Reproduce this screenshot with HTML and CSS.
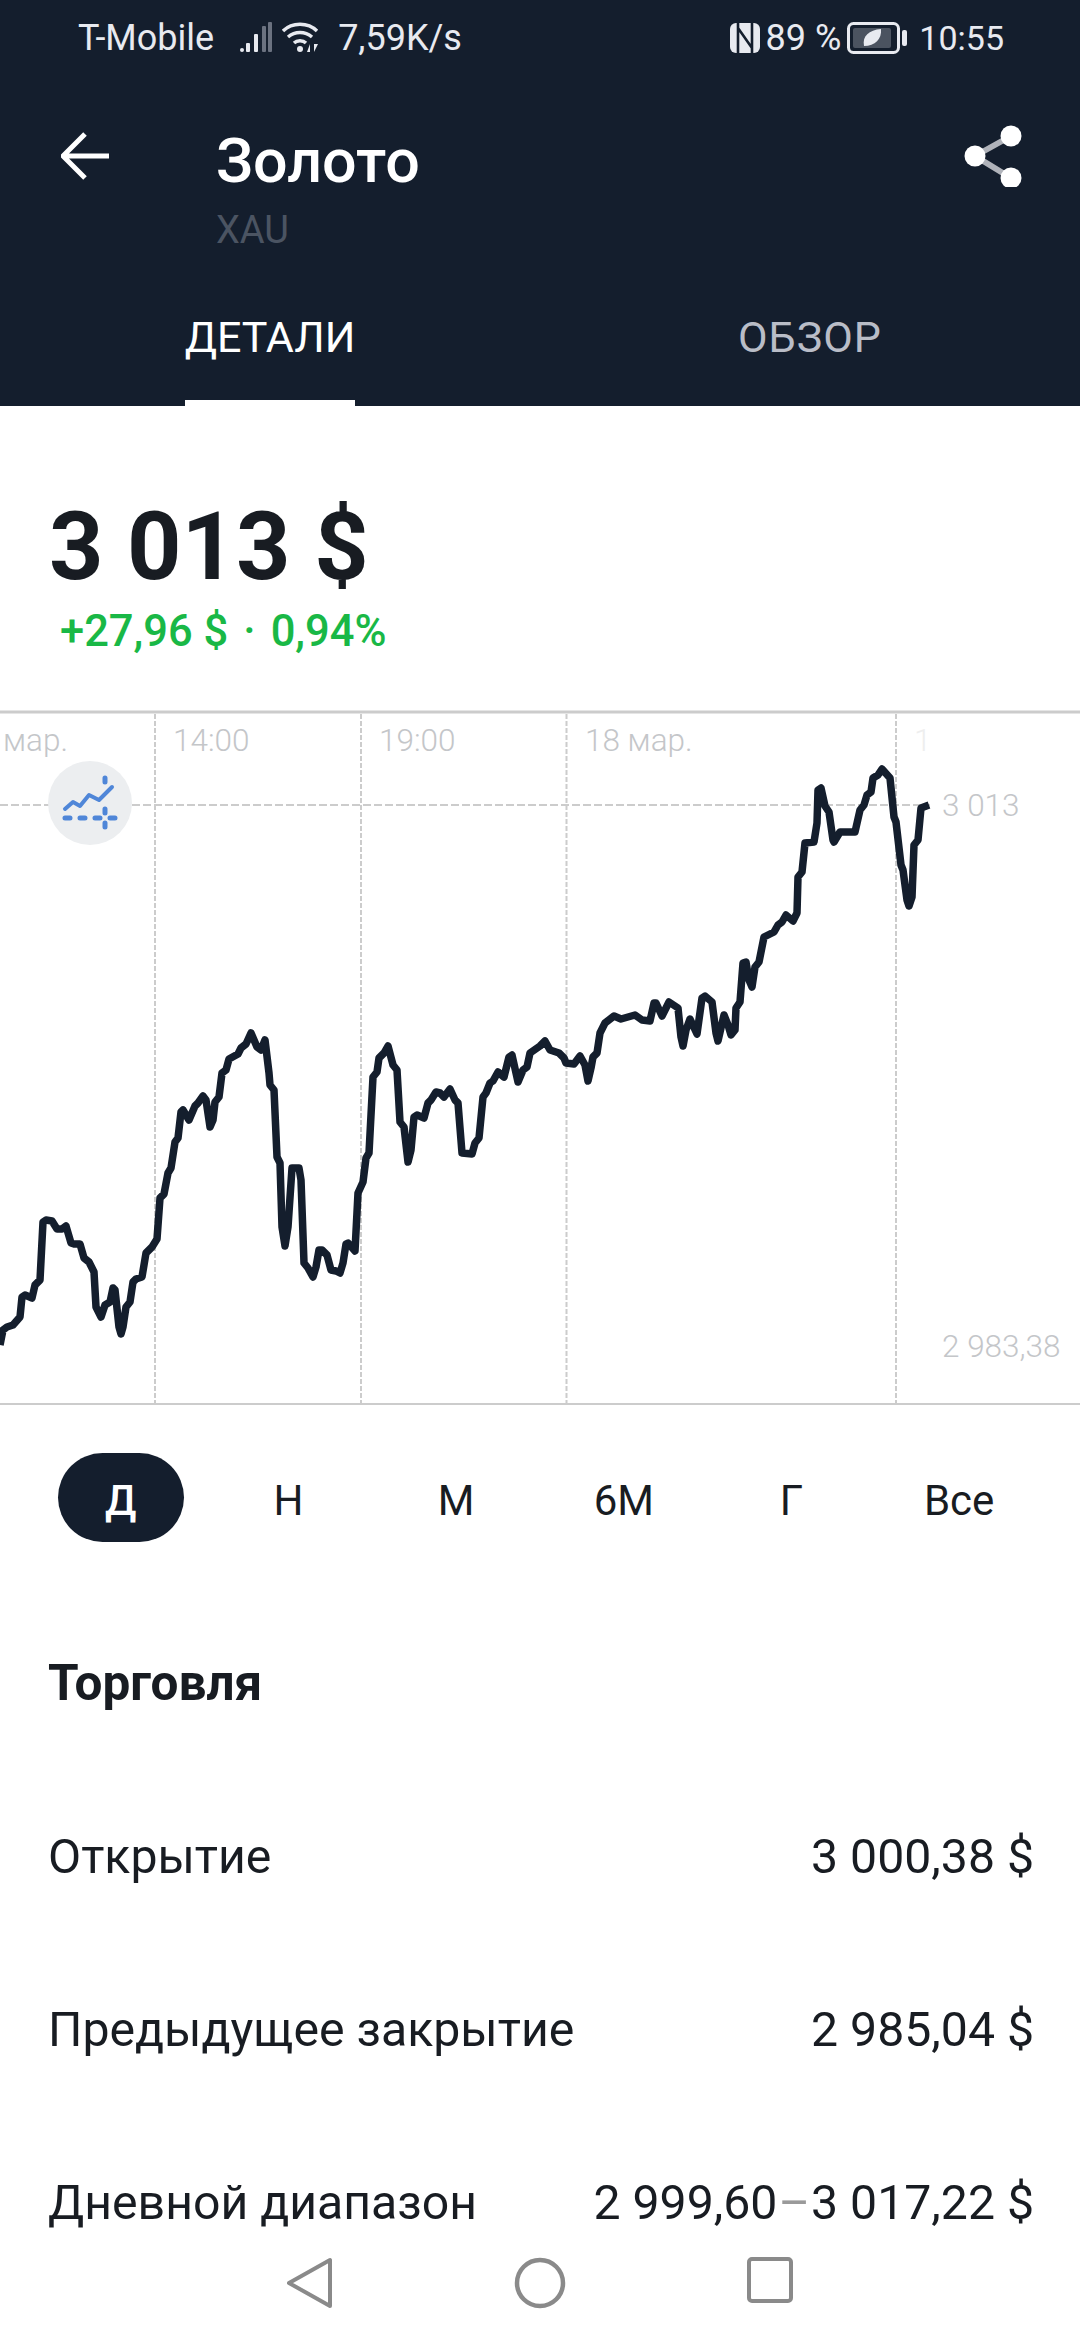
FILE: index.html
```html
<!DOCTYPE html>
<html lang="ru">

<head>
    <meta charset="UTF-8">
    <meta name="viewport" content="width=device-width, initial-scale=1.0">
    <title>Золото</title>
    <link rel="stylesheet" href="styles.css">
</head>

<body>
    <header class="header">
        <div class="status">
            <div class="status-group">
                <span class="carrier">T-Mobile</span>
                <svg class="signal" width="34" height="32" viewBox="0 0 34 32">
                    <rect x="1" y="26" width="4" height="4" rx="2" fill="#e8eaf0" />
                    <rect x="7" y="21" width="4" height="9" rx="1" fill="#e8eaf0" />
                    <rect x="15" y="12" width="4" height="18" rx="1" fill="#e8eaf0" />
                    <rect x="23" y="4" width="4" height="26" rx="1" fill="#6b7280" />
                    <rect x="29" y="0" width="4" height="30" rx="1" fill="#6b7280" />
                </svg>
                <svg class="wifi" width="38" height="32" viewBox="0 0 38 32">
                    <path d="M1 9C10 0 26 0 35 9" fill="none" stroke="#e8eaf0" stroke-width="3.4" />
                    <path d="M6 15C13 9 23 9 30 15" fill="none" stroke="#e8eaf0" stroke-width="3.4" />
                    <path d="M12 21C15 18 21 18 24 21" fill="none" stroke="#e8eaf0" stroke-width="3.4" />
                    <circle cx="18" cy="27" r="3" fill="#e8eaf0" />
                    <path d="M28 30V22L25 30ZM32 22V30L36 22Z" fill="#e8eaf0" />
                </svg>
                <span class="speed">7,59K/s</span>
            </div>
            <div class="status-group">
                <svg class="nfc" width="30" height="32" viewBox="0 0 30 32">
                    <rect x="0" y="1" width="30" height="30" rx="6" fill="#e8eaf0" />
                    <path d="M8 1V31M22 1V31M8 6L22 26" fill="none" stroke="#141e2d" stroke-width="2.6" />
                </svg>
                <span class="battery-pct">89 %</span>
                <svg class="battery" width="60" height="32" viewBox="0 0 60 32">
                    <rect x="1.5" y="1.5" width="50" height="29" rx="5" fill="none" stroke="#e8eaf0" stroke-width="3" />
                    <rect x="6" y="6" width="38" height="20" rx="2" fill="#4b5360" />
                    <path d="M17 24C15 14 22 8 34 7C35 17 28 24 17 24Z" fill="#e8eaf0" />
                    <rect x="55" y="8" width="5" height="16" rx="2" fill="#e8eaf0" />
                </svg>
                <span class="clock">10:55</span>
            </div>
        </div>

        <div class="appbar">
            <svg class="back" width="50" height="50" viewBox="0 0 50 50">
                <path d="M48 25H4M24 3L2 25L24 47" fill="none" stroke="#fff" stroke-width="5" />
            </svg>
            <div class="appbar-title">
                <h1>Золото</h1>
                <p>XAU</p>
            </div>
            <svg class="share" width="62" height="62" viewBox="0 0 62 62">
                <path d="M11 31L47 11M11 31L47 53" fill="none" stroke="#b0b3ba" stroke-width="6" />
                <circle cx="47" cy="11" r="10.5" fill="#fff" />
                <circle cx="11" cy="31" r="10.5" fill="#fff" />
                <circle cx="47" cy="53" r="10.5" fill="#fff" />
            </svg>
        </div>

        <nav class="tabs">
            <div class="tab active"><span>ДЕТАЛИ</span></div>
            <div class="tab"><span>ОБЗОР</span></div>
        </nav>
    </header>

    <main class="content">
        <section class="price-box">
            <div class="price">3 013 $</div>
            <div class="change">+27,96 $<i class="sep">·</i>0,94%</div>
        </section>

        <svg class="chart" width="1080" height="700" viewBox="0 708 1080 700">
            <line class="frame frame-top" x1="0" y1="712" x2="1080" y2="712" />
            <line class="frame" x1="0" y1="1404" x2="1080" y2="1404" />

            <line class="grid-v" x1="155" y1="714" x2="155" y2="1403" />
            <line class="grid-v" x1="361" y1="714" x2="361" y2="1403" />
            <line class="grid-v" x1="566.5" y1="714" x2="566.5" y2="1403" />
            <line class="grid-v" x1="896" y1="714" x2="896" y2="1403" />
            <line class="grid-h" x1="0" y1="805" x2="930" y2="805" />

            <text class="axis" x="3" y="751">мар.</text>
            <text class="axis" x="173" y="751">14:00</text>
            <text class="axis" x="379" y="751">19:00</text>
            <text class="axis" x="585" y="751">18 мар.</text>
            <text class="axis axis-faint" x="914" y="751">1</text>
            <text class="axis" x="942" y="816">3 013</text>
            <text class="axis" x="942" y="1357">2 983,38</text>

            <circle cx="90" cy="803" r="42" fill="#eceef0" />
            <path class="tool-line" d="M65 809L73 802L80 806L89 795L99 800L112 787" />
            <path class="tool-dash" d="M65 818H70M80 818H85M95 818H100M110 818H115" />
            <path class="tool-dash" d="M105 778V782M105 809V813M105 823V827" />

            <polyline class="price-line" points="0,1345 3,1330 7,1327 13,1325 20,1317 22,1297 25,1295 32,1298 35,1285 40,1280 43,1222 46,1220 52,1221 57,1229 62,1229 66,1226 71,1243 74,1244 80,1244 84,1258 89,1262 94,1272 96,1307 101,1317 105,1305 110,1302 113,1288 115,1290 119,1327 121,1334 123,1327 126,1307 130,1302 133,1282 136,1279 142,1277 146,1253 152,1247 157,1239 160,1198 164,1194 168,1173 171,1168 175,1142 178,1138 181,1112 183,1110 189,1120 195,1106 198,1103 203,1096 206,1100 210,1127 213,1120 215,1102 219,1097 222,1073 226,1070 229,1059 238,1054 241,1048 246,1044 251,1033 257,1047 261,1050 265,1040 269,1073 270,1085 274,1090 277,1157 280,1163 282,1227 285,1246 288,1227 292,1168 299,1168 301,1180 304,1263 308,1268 313,1277 316,1267 319,1250 322,1250 327,1255 331,1270 336,1271 340,1273 343,1263 346,1244 348,1243 355,1251 358,1193 363,1182 366,1158 369,1153 373,1077 377,1072 379,1058 384,1053 388,1046 393,1065 397,1070 400,1122 404,1127 408,1162 411,1150 414,1117 417,1115 424,1118 428,1103 431,1100 436,1092 440,1093 444,1097 450,1089 455,1100 458,1103 462,1153 472,1154 475,1143 479,1138 483,1097 486,1093 490,1083 493,1081 498,1072 504,1077 509,1057 512,1055 518,1082 523,1070 527,1067 530,1053 540,1046 545,1041 550,1050 559,1053 564,1058 566,1063 574,1064 580,1056 585,1065 588,1081 591,1068 593,1057 597,1053 600,1033 605,1023 614,1016 621,1019 635,1015 642,1020 650,1021 654,1003 656,1003 662,1016 669,1002 678,1008 681,1037 683,1046 686,1030 690,1019 697,1034 702,998 705,996 712,1002 716,1033 718,1041 721,1028 724,1015 728,1025 731,1035 735,1030 736,1008 740,1002 743,963 746,962 749,980 752,987 755,967 759,962 764,937 774,932 778,925 782,922 786,915 793,921 797,913 798,877 802,872 805,843 814,842 817,823 818,790 821,788 825,806 829,812 833,840 834,842 840,832 855,832 860,810 864,805 867,795 871,792 873,778 878,775 882,769 890,778 894,817 896,822 901,865 903,870 907,900 909,906 912,897 914,845 918,840 921,808 929,805" />
        </svg>

        <div class="periods">
            <div class="period active">Д</div>
            <div class="period">Н</div>
            <div class="period">М</div>
            <div class="period">6М</div>
            <div class="period">Г</div>
            <div class="period">Все</div>
        </div>

        <section class="trade">
            <h2>Торговля</h2>
            <div class="row">
                <span>Открытие</span>
                <span>3 000,38 $</span>
            </div>
            <div class="row">
                <span>Предыдущее закрытие</span>
                <span>2 985,04 $</span>
            </div>
            <div class="row">
                <span>Дневной диапазон</span>
                <span>2 999,60<i class="dash">–</i>3 017,22 $</span>
            </div>
        </section>
    </main>

    <footer class="navbar">
        <svg width="46" height="52" viewBox="0 0 46 52">
            <path d="M43 3V49L2 26Z" fill="none" stroke="#8a8a8a" stroke-width="4" stroke-linejoin="round" />
        </svg>
        <svg width="52" height="52" viewBox="0 0 52 52">
            <circle cx="26" cy="26" r="23" fill="none" stroke="#8a8a8a" stroke-width="4.5" />
        </svg>
        <svg width="46" height="46" viewBox="0 0 46 46">
            <rect x="2" y="2" width="42" height="42" rx="3" fill="none" stroke="#8a8a8a" stroke-width="4" />
        </svg>
    </footer>
</body>

</html>
```

FILE: styles.css
```css
* {
    margin: 0;
    padding: 0;
    box-sizing: border-box;
}

body {
    width: 1080px;
    height: 2340px;
    display: flex;
    flex-direction: column;
    overflow: hidden;
    background-color: white;
    color: #181c22;
    font-family: Roboto, "Noto Sans", sans-serif;
}

.header {
    height: 406px;
    flex-shrink: 0;
    background-color: #141e2d;
    color: white;
}

.status {
    height: 76px;
    padding: 0 76px 0 78px;
    display: flex;
    justify-content: space-between;
    align-items: center;
    font-size: 36px;
    color: #e8eaf0;
}

.status-group {
    display: flex;
    align-items: center;
}

.signal {
    margin-left: 25px;
}

.wifi {
    margin-left: 9px;
}

.speed {
    margin-left: 18px;
}

.battery-pct {
    margin-left: 6px;
}

.battery {
    margin-left: 6px;
}

.clock {
    margin-left: 12px;
    font-size: 34px;
}

.appbar {
    height: 200px;
    padding-left: 61px;
    display: flex;
    align-items: flex-start;
}

.back {
    margin-top: 55px;
}

.appbar-title {
    margin-left: 105px;
    padding-top: 50px;
    flex: 1;
}

.appbar-title h1 {
    font-size: 61px;
    font-weight: 500;
    line-height: 70px;
}

.appbar-title p {
    margin-top: 11px;
    font-size: 38px;
    line-height: 46px;
    color: #4b5462;
}

.share {
    margin-top: 49px;
    margin-right: 54px;
}

.tabs {
    height: 130px;
    display: flex;
}

.tab {
    flex: 1;
    padding-top: 36px;
    display: flex;
    justify-content: center;
    align-items: flex-start;
    font-size: 43px;
    color: #b9bdc7;
}

.tab span {
    height: 94px;
    line-height: 50px;
    border-bottom: 6px solid transparent;
    letter-spacing: 1px;
}

.tab.active {
    color: white;
}

.tab.active span {
    border-bottom-color: white;
    letter-spacing: 0;
}

.content {
    flex: 1;
    overflow: hidden;
}

.price-box {
    padding: 86px 0 46px 49px;
}

.price {
    font-size: 95px;
    font-weight: 700;
    line-height: 110px;
}

.change {
    padding-left: 11px;
    font-size: 43.5px;
    font-weight: 500;
    line-height: 60px;
    color: #19b846;
}

.sep {
    margin: 0 15px;
    font-style: normal;
}

.chart {
    display: block;
}

.frame {
    stroke: #cccccc;
    stroke-width: 2;
}

.frame-top {
    stroke-width: 3;
}

.grid-v {
    stroke: #cccccc;
    stroke-width: 2;
    stroke-dasharray: 5 2;
}

.grid-h {
    stroke: #cccccc;
    stroke-width: 2;
    stroke-dasharray: 8 3;
}

.axis {
    font-size: 31.5px;
    font-weight: 300;
    fill: #c4c6c9;
}

.axis-faint {
    fill: #eeeeee;
}

.tool-line {
    fill: none;
    stroke: #4f86d8;
    stroke-width: 4;
    stroke-linejoin: round;
    stroke-linecap: round;
}

.tool-dash {
    fill: none;
    stroke: #4f86d8;
    stroke-width: 5;
    stroke-linecap: round;
}

.price-line {
    fill: none;
    stroke: #141e2d;
    stroke-width: 7.5;
    stroke-linejoin: round;
}

.periods {
    padding: 45px 37px 0;
    display: grid;
    grid-template-columns: repeat(6, 1fr);
}

.period {
    height: 89px;
    line-height: 95px;
    text-align: center;
    font-size: 42px;
}

.period.active {
    width: 126px;
    justify-self: center;
    border-radius: 45px;
    background-color: #141e2d;
    color: white;
    font-weight: 500;
}

.trade {
    padding: 111px 46px 0 48px;
}

.trade h2 {
    font-size: 49.5px;
    font-weight: 700;
    line-height: 60px;
    margin-bottom: 57px;
}

.row {
    height: 173px;
    display: flex;
    justify-content: space-between;
    align-items: center;
    font-size: 48.2px;
    line-height: 58px;
}

.dash {
    margin: 0 1px;
    font-style: normal;
    color: #9a9a9a;
}

.navbar {
    height: 112px;
    flex-shrink: 0;
    padding-top: 29px;
    display: flex;
    justify-content: center;
    align-items: flex-start;
    gap: 181px;
    background-color: white;
}
```
